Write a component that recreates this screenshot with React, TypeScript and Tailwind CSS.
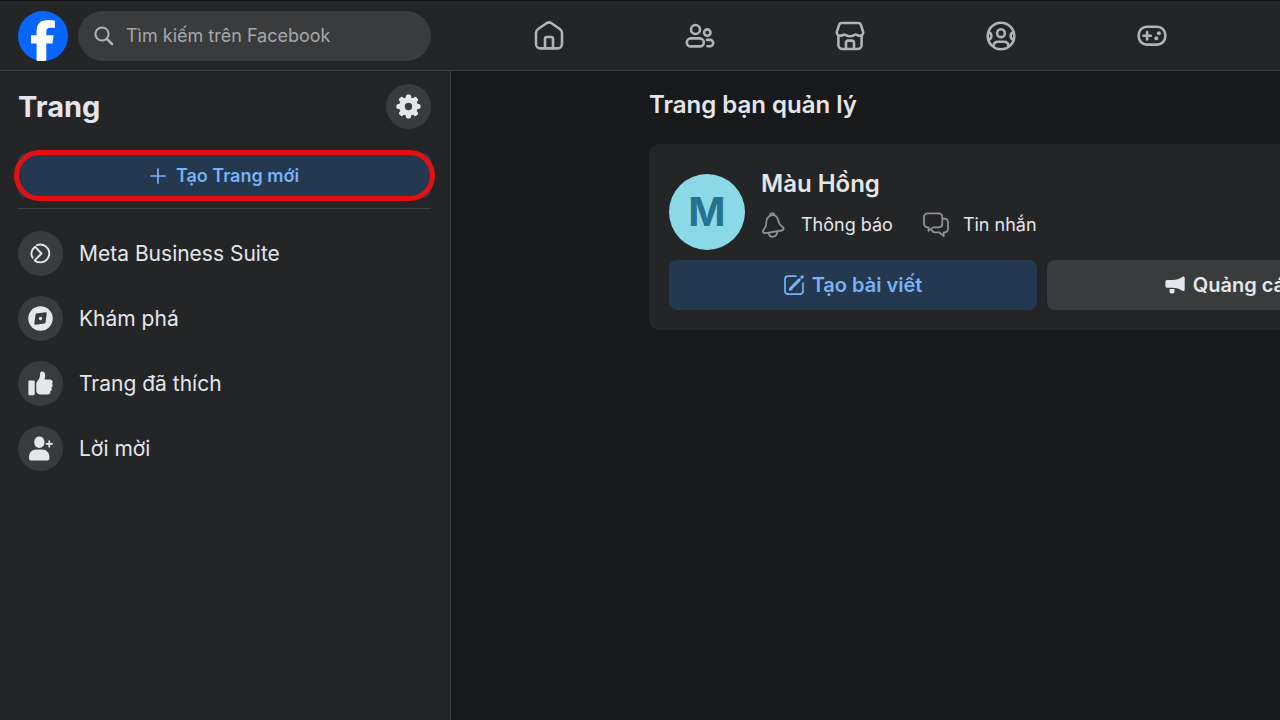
import type { ReactNode } from "react";
import { clsx } from "clsx";

interface NavItem {
  label: string;
  icon: ReactNode;
}

function FacebookLogo() {
  return (
    <svg viewBox="0 0 50 50" className="h-[50px] w-[50px]" aria-hidden="true">
      <circle cx="25" cy="25" r="25" fill="#0866ff" />
      <path
        fill="#fff"
        d="M18.6 49.8V32.6H13v-8.3h5.6v-3.5c0-8 3.6-11.8 11.5-11.8 2.4 0 5 .3 6.8.7v7.3c-1-.2-2.5-.3-4.1-.3-3.4 0-4.5 1.4-4.5 4.7v2.9h7.4l-1.3 8.3h-6.1v17.2c-3 .5-6.6.5-9.7 0z"
      />
    </svg>
  );
}

const strokeProps = {
  fill: "none",
  stroke: "currentColor",
  strokeWidth: 2.6,
  strokeLinecap: "round" as const,
  strokeLinejoin: "round" as const,
};

function HomeIcon() {
  return (
    <svg viewBox="0 0 32 32" className="h-8 w-8" {...strokeProps}>
      <path d="M3 13c0-1.800.7-3 2.200-4l8.300-5.700a4.400 4.400 0 0 1 5 0L26.800 9c1.500 1 2.200 2.200 2.200 4v11a4.400 4.400 0 0 1-4.400 4.400H7.400A4.400 4.400 0 0 1 3 24z" />
      <path d="M12 28v-9.300A1.700 1.700 0 0 1 13.700 17h4.600a1.700 1.700 0 0 1 1.700 1.700V28" />
    </svg>
  );
}

function FriendsIcon() {
  return (
    <svg viewBox="0 0 32 32" className="h-8 w-8" {...strokeProps}>
      <circle cx="11.500" cy="9.500" r="4.500" />
      <circle cx="23.300" cy="12.600" r="3.200" />
      <rect x="2.800" y="18.400" width="17" height="8" rx="4" />
      <path d="M23 19.900h3a3.200 3.200 0 0 1 3.200 3.200v0a3.200 3.200 0 0 1-3.200 3.200h-2.500" />
    </svg>
  );
}

function MarketplaceIcon() {
  return (
    <svg viewBox="0 0 32 32" className="h-8 w-8" {...strokeProps}>
      <path d="M5.200 4.600C5.600 3.500 6.400 3 7.600 3h16.800c1.200 0 2 .5 2.400 1.600l2.300 7c.5 2-.8 4.200-3.200 4.200-2 0-3-1.300-4.200-1.300-1.400 0-2 1.700-5.700 1.700s-4.300-1.700-5.700-1.700c-1.200 0-2.200 1.300-4.200 1.300-2.400 0-3.700-2.200-3.200-4.200z" />
      <path d="M4.400 15.600V25a4 4 0 0 0 4 4h15.200a4 4 0 0 0 4-4v-9.400" />
      <path d="M12 28.500v-6a1.900 1.900 0 0 1 1.900-1.900h4.200a1.900 1.900 0 0 1 1.900 1.900v6" />
    </svg>
  );
}

function GroupsIcon() {
  return (
    <svg viewBox="0 0 32 32" className="h-8 w-8" {...strokeProps}>
      <circle cx="16" cy="16" r="13.300" />
      <circle cx="16" cy="13.200" r="3.900" />
      <path d="M8.600 26c0-2.700 1.900-4.200 4.600-4.200h5.600c2.700 0 4.600 1.500 4.600 4.200" />
      <path d="M3.700 12.300a3.900 3.900 0 0 1 0 7.400M28.300 12.300a3.900 3.900 0 0 0 0 7.400" />
    </svg>
  );
}

function GamingIcon() {
  return (
    <svg viewBox="0 0 32 32" className="h-8 w-8" {...strokeProps}>
      <rect x="2.700" y="6.800" width="26.600" height="17.800" rx="8" />
      <path d="M7.400 15.700h7.400M11.100 12v7.400" />
      <circle cx="22.900" cy="13.200" r="2" fill="currentColor" stroke="none" />
      <circle cx="20.300" cy="18.200" r="2" fill="currentColor" stroke="none" />
    </svg>
  );
}

function SearchIcon() {
  return (
    <svg viewBox="0 0 20 20" className="h-5 w-5 shrink-0" fill="none" stroke="currentColor" strokeWidth="2">
      <circle cx="8" cy="8" r="6.600" />
      <path d="m12.800 12.800 5.200 5.200" strokeWidth="2.600" strokeLinecap="round" />
    </svg>
  );
}

function GearIcon() {
  const teeth = [0, 45, 90, 135];
  return (
    <svg viewBox="0 0 26 26" className="h-[25px] w-[25px]" fill="currentColor">
      <mask id="gear-hole">
        <rect width="26" height="26" fill="#fff" />
        <circle cx="13" cy="13" r="3.800" fill="#000" />
      </mask>
      <g mask="url(#gear-hole)">
        <circle cx="13" cy="13" r="9.800" />
        {teeth.map((angle) => (
          <rect key={angle} x="10.300" y="0.400" width="5.400" height="25.200" rx="1.900" transform={`rotate(${angle} 13 13)`} />
        ))}
      </g>
    </svg>
  );
}

function BusinessSuiteIcon() {
  return (
    <svg viewBox="0 0 26 26" className="h-[25px] w-[25px]" fill="none" stroke="currentColor" strokeWidth="2" strokeLinejoin="round" strokeLinecap="round">
      <path d="M9.400 4.300A9.300 9.300 0 1 1 7 20.200L14 13 7.300 5.900C2.900 9.400 2.900 14.600 4.800 17.400" />
    </svg>
  );
}

function CompassIcon() {
  return (
    <svg viewBox="0 0 26 26" className="h-[25px] w-[25px]">
      <circle cx="13" cy="13" r="12.700" fill="currentColor" />
      <path d="M9.100 7.700 18.200 6.600a1 1 0 0 1 1.200 1.200L18.300 17a1.400 1.400 0 0 1-1.200 1.200L7.800 19.400a1 1 0 0 1-1.200-1.200L7.800 9a1.400 1.400 0 0 1 1.300-1.300z" fill="#3a3b3c" />
      <circle cx="13" cy="13" r="1.700" fill="currentColor" />
    </svg>
  );
}

function LikeIcon() {
  return (
    <svg viewBox="0 0 26 26" className="h-[25px] w-[25px]" fill="currentColor">
      <rect x="0.400" y="9.800" width="6.600" height="15.400" rx="1.300" />
      <path d="M8.600 13.200c0-1.200.4-2 1.200-2.900 1.300-1.500 2.400-3.300 2.600-5.200l.2-2.600C12.700 1.200 13.600.5 14.700.5c2 0 3.200 1.600 3.200 4 0 1.600-.3 3-.7 4.400h5.600c1.700 0 2.900 1.100 2.900 2.500 0 .8-.3 1.400-.8 1.900.4.500.7 1.100.7 1.900 0 1-.6 1.800-1.300 2.200.3.400.4.900.4 1.500 0 1.100-.7 2-1.600 2.200.1.300.2.700.2 1 0 1.300-1 2.400-2.600 2.400h-7.900c-2.500 0-4.200-1.600-4.200-4.100z" />
    </svg>
  );
}

function InviteIcon() {
  return (
    <svg viewBox="0 0 26 26" className="h-[25px] w-[25px]" fill="currentColor">
      <rect x="6.500" y="0.400" width="10.600" height="12" rx="5.300" />
      <path d="M1 22.600c0-5.300 3-8.500 7.600-8.500h6c4.600 0 7.700 3.200 7.700 8.500 0 2-1 3-2.800 3H3.800c-1.800 0-2.800-1-2.800-3z" />
      <path d="M22.100 5.300v5.800M19.200 8.200H25" stroke="currentColor" strokeWidth="1.800" strokeLinecap="round" />
    </svg>
  );
}

function BellIcon() {
  return (
    <svg viewBox="0 0 26 26" className="h-[26px] w-[26px]" fill="none" stroke="currentColor" strokeWidth="1.800" strokeLinejoin="round">
      <path d="M11.300 3.100c-4 .9-6 4-6 7.400 0 3.400-.7 5-2.400 6.900-1.600 2-.8 4 1.600 3.700l16-2.600c2.400-.5 2.900-2.500.9-3.700-2.300-1.400-3.300-2.900-3.900-5.500-.9-4-3-6.600-6.200-6.200z" />
      <path d="M9.200 3.800c-.6-3 3.800-3.500 4.400-.7M7.600 20.800c.8 5.600 8.400 5.200 8.800-1.300" />
    </svg>
  );
}

function ChatIcon() {
  return (
    <svg viewBox="0 0 26 26" className="h-[26px] w-[26px]" fill="none" stroke="currentColor" strokeWidth="1.800" strokeLinejoin="round">
      <path d="M4.800 1.300h10.600c2.500 0 3.900 1.400 3.900 3.900v6.300c0 2.500-1.400 3.900-3.900 3.900H10l-4.500 3.400v-3.400h-.7C2.400 15.400 1 14 1 11.500V5.200c0-2.500 1.400-3.900 3.800-3.900z" />
      <path d="M19.300 6.700h2c2.400 0 3.700 1.400 3.700 3.800v6.100c0 2-.9 3.300-2.600 3.700h-1.700V24l-4.500-3.700h-3.800c-2 0-3.200-.9-3.700-2.600" />
    </svg>
  );
}

function ComposeIcon() {
  return (
    <svg viewBox="0 0 20 20" className="h-5 w-5" fill="none" stroke="currentColor" strokeWidth="1.700" strokeLinecap="round">
      <path d="M12 1.200H4.200a3.200 3.200 0 0 0-3.200 3.200V16a3.200 3.200 0 0 0 3.200 3.200h11.600A3.200 3.200 0 0 0 19 16V8.200" />
      <path d="m7 13.300 8.300-8.400" strokeWidth="3" />
      <path d="m5.400 15 .6-2.500 2 1.900z" fill="currentColor" strokeWidth="1" />
      <path d="m18 2.100.1-.1" strokeWidth="3.200" />
    </svg>
  );
}

function MegaphoneIcon() {
  return (
    <svg viewBox="0 0 20 20" className="h-5 w-5" fill="currentColor">
      <path d="M2.300 5h5.400c3.500 0 6.900-1.200 9.500-3 1.200-.8 2.500-.3 2.500 1.100v11.500c0 1.400-1.300 1.900-2.500 1.100-2.600-1.700-6-2.900-9.500-2.900H2.300C1.100 12.800.4 12.100.4 11V6.800C.4 5.700 1.100 5 2.300 5z" />
      <path d="M4.600 14h4.900v2.500c0 1.200-.7 1.900-1.800 1.900H6.400c-1.100 0-1.800-.7-1.800-1.900z" />
    </svg>
  );
}

const topNav: NavItem[] = [
  { label: "Trang chủ", icon: <HomeIcon /> },
  { label: "Bạn bè", icon: <FriendsIcon /> },
  { label: "Marketplace", icon: <MarketplaceIcon /> },
  { label: "Nhóm", icon: <GroupsIcon /> },
  { label: "Trò chơi", icon: <GamingIcon /> },
];

const sideNav: NavItem[] = [
  { label: "Meta Business Suite", icon: <BusinessSuiteIcon /> },
  { label: "Khám phá", icon: <CompassIcon /> },
  { label: "Trang đã thích", icon: <LikeIcon /> },
  { label: "Lời mời", icon: <InviteIcon /> },
];

function Header() {
  return (
    <header className="flex h-[71px] shrink-0 items-center border-y border-t-[#111213] border-b-[#3a3b3c] bg-[#242526]">
      <div className="flex w-[451px] shrink-0 items-center gap-2.5 pr-5 pl-[18px]">
        <a href="#home" aria-label="Facebook" className="shrink-0">
          <FacebookLogo />
        </a>
        <label className="flex h-[50px] min-w-0 flex-1 items-center gap-3 rounded-full bg-[#3a3b3c] px-4 text-[#b0b3b8]">
          <SearchIcon />
          <input
            type="search"
            aria-label="Tìm kiếm trên Facebook"
            placeholder="Tìm kiếm trên Facebook"
            className="min-w-0 flex-1 bg-transparent text-lg outline-none placeholder:text-[#a5a7ab]"
          />
        </label>
      </div>
      <nav className="mr-[53px] ml-[23px] flex flex-1">
        {topNav.map((item) => (
          <a key={item.label} href="#nav" aria-label={item.label} className="flex flex-1 justify-center text-[#b0b3b8]">
            {item.icon}
          </a>
        ))}
      </nav>
    </header>
  );
}

function Sidebar() {
  return (
    <aside className="w-[451px] shrink-0 border-r border-[#3a3b3c] bg-[#242526] pt-[13px] pr-[19px] pl-[18px]">
      <div className="flex items-center justify-between">
        <h1 className="text-[29px] font-bold">Trang</h1>
        <button type="button" aria-label="Cài đặt" className="flex h-[45px] w-[45px] items-center justify-center rounded-full bg-[#3a3b3c]">
          <GearIcon />
        </button>
      </div>
      <button
        type="button"
        className="relative mt-6 flex h-[45px] w-full items-center justify-center gap-2.5 rounded-lg bg-[#24394f] text-lg font-semibold text-[#78b1f6]"
      >
        <svg viewBox="0 0 16 16" className="h-4 w-4" stroke="currentColor" strokeWidth="1.700" strokeLinecap="round">
          <path d="M8 1v14M1 8h14" />
        </svg>
        Tạo Trang mới
        <span className="absolute -inset-x-1 -inset-y-[3px] rounded-full border-5 border-[#e50f12]" />
      </button>
      <hr className="mt-2.5 border-[#3e4042]" />
      <ul className="mt-[22px] flex flex-col gap-5">
        {sideNav.map((item) => (
          <li key={item.label}>
            <a href="#pages" className="flex items-center gap-4 text-[21px]">
              <span className="flex h-[45px] w-[45px] items-center justify-center rounded-full bg-[#3a3b3c]">{item.icon}</span>
              {item.label}
            </a>
          </li>
        ))}
      </ul>
    </aside>
  );
}

interface ActionButtonProps {
  icon: ReactNode;
  label: string;
  primary?: boolean;
}

function ActionButton({ icon, label, primary }: ActionButtonProps) {
  return (
    <button
      type="button"
      className={clsx(
        "flex h-[50px] flex-1 items-center justify-center gap-2 rounded-lg text-xl font-semibold",
        primary ? "bg-[#24394f] text-[#78b1f6]" : "bg-[#3a3b3c] text-[#e4e6eb]"
      )}
    >
      {icon}
      {label}
    </button>
  );
}

function PageCard() {
  return (
    <article className="mt-[23px] min-w-[786px] rounded-[10px] bg-[#242526] px-5 pt-6 pb-5">
      <div className="flex items-end gap-4">
        <div className="flex h-[76px] w-[76px] items-center justify-center rounded-full bg-[#8bd8e6] text-[40px] font-bold text-[#26738f]">M</div>
        <div className="flex flex-col gap-3 pb-3">
          <h3 className="text-2xl font-semibold">Màu Hồng</h3>
          <div className="flex gap-[30px] text-lg leading-[26px]">
            <a href="#notifications" className="flex items-center gap-3.5">
              <span className="text-[#8f9098]"><BellIcon /></span>
              Thông báo
            </a>
            <a href="#messages" className="flex items-center gap-3.5">
              <span className="text-[#8f9098]"><ChatIcon /></span>
              Tin nhắn
            </a>
          </div>
        </div>
      </div>
      <div className="mt-2.5 flex gap-2.5">
        <ActionButton icon={<ComposeIcon />} label="Tạo bài viết" primary />
        <ActionButton icon={<MegaphoneIcon />} label="Quảng cáo" />
      </div>
    </article>
  );
}

export default function App() {
  return (
    <div className="flex min-h-screen flex-col bg-[#18191a] font-['Inter',sans-serif] text-[#e4e6eb]">
      <Header />
      <div className="flex flex-1">
        <Sidebar />
        <main className="min-w-0 flex-1 overflow-hidden pt-[18px] pl-[198px]">
          <h2 className="text-2xl font-semibold">Trang bạn quản lý</h2>
          <PageCard />
        </main>
      </div>
    </div>
  );
}
